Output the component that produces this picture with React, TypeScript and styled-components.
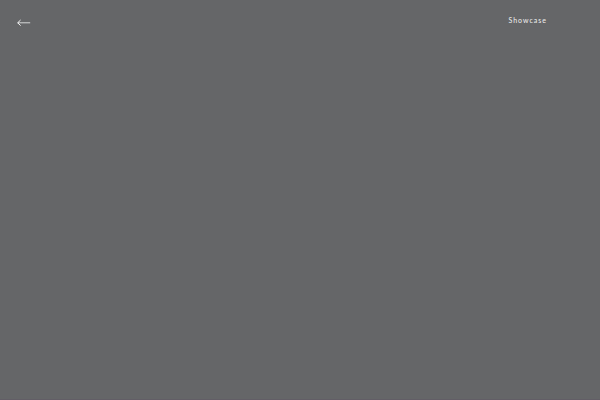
import React from 'react';
import styled, { createGlobalStyle } from 'styled-components';

const GlobalStyle = createGlobalStyle`
  body {
    margin: 0;
    background-color: #656668;
    font-family: Lato, 'Open Sans', sans-serif;
  }
`;

const Page = styled.div`
  display: flex;
  flex-direction: column;
  box-sizing: border-box;
  min-height: 100vh;
  border-bottom: 1px solid #625e66;
`;

const Header = styled.header`
  display: flex;
  justify-content: space-between;
  align-items: flex-start;
  padding: 15px 53px 0 17px;
`;

const BackButton = styled.button`
  display: flex;
  margin: 4px 0 0;
  padding: 0;
  border: none;
  background: none;
  color: #f4f4f4;
  cursor: pointer;
`;

const ShowcaseLink = styled.a`
  color: #f0f0f0;
  font-size: 7px;
  line-height: 10px;
  letter-spacing: 1px;
  text-decoration: none;
`;

function App() {
  return (
    <>
      <GlobalStyle />
      <Page>
        <Header>
          <BackButton type="button" aria-label="Back">
            <svg width="14" height="8" viewBox="0 0 14 8" fill="none" stroke="currentColor">
              <path d="M0.7 3.8H13.2" strokeWidth="0.8" />
              <path d="M3.6 1L0.7 3.8L3.6 6.6" strokeWidth="1" />
            </svg>
          </BackButton>
          <ShowcaseLink href="#showcase">Showcase</ShowcaseLink>
        </Header>
      </Page>
    </>
  );
}

export default App;
